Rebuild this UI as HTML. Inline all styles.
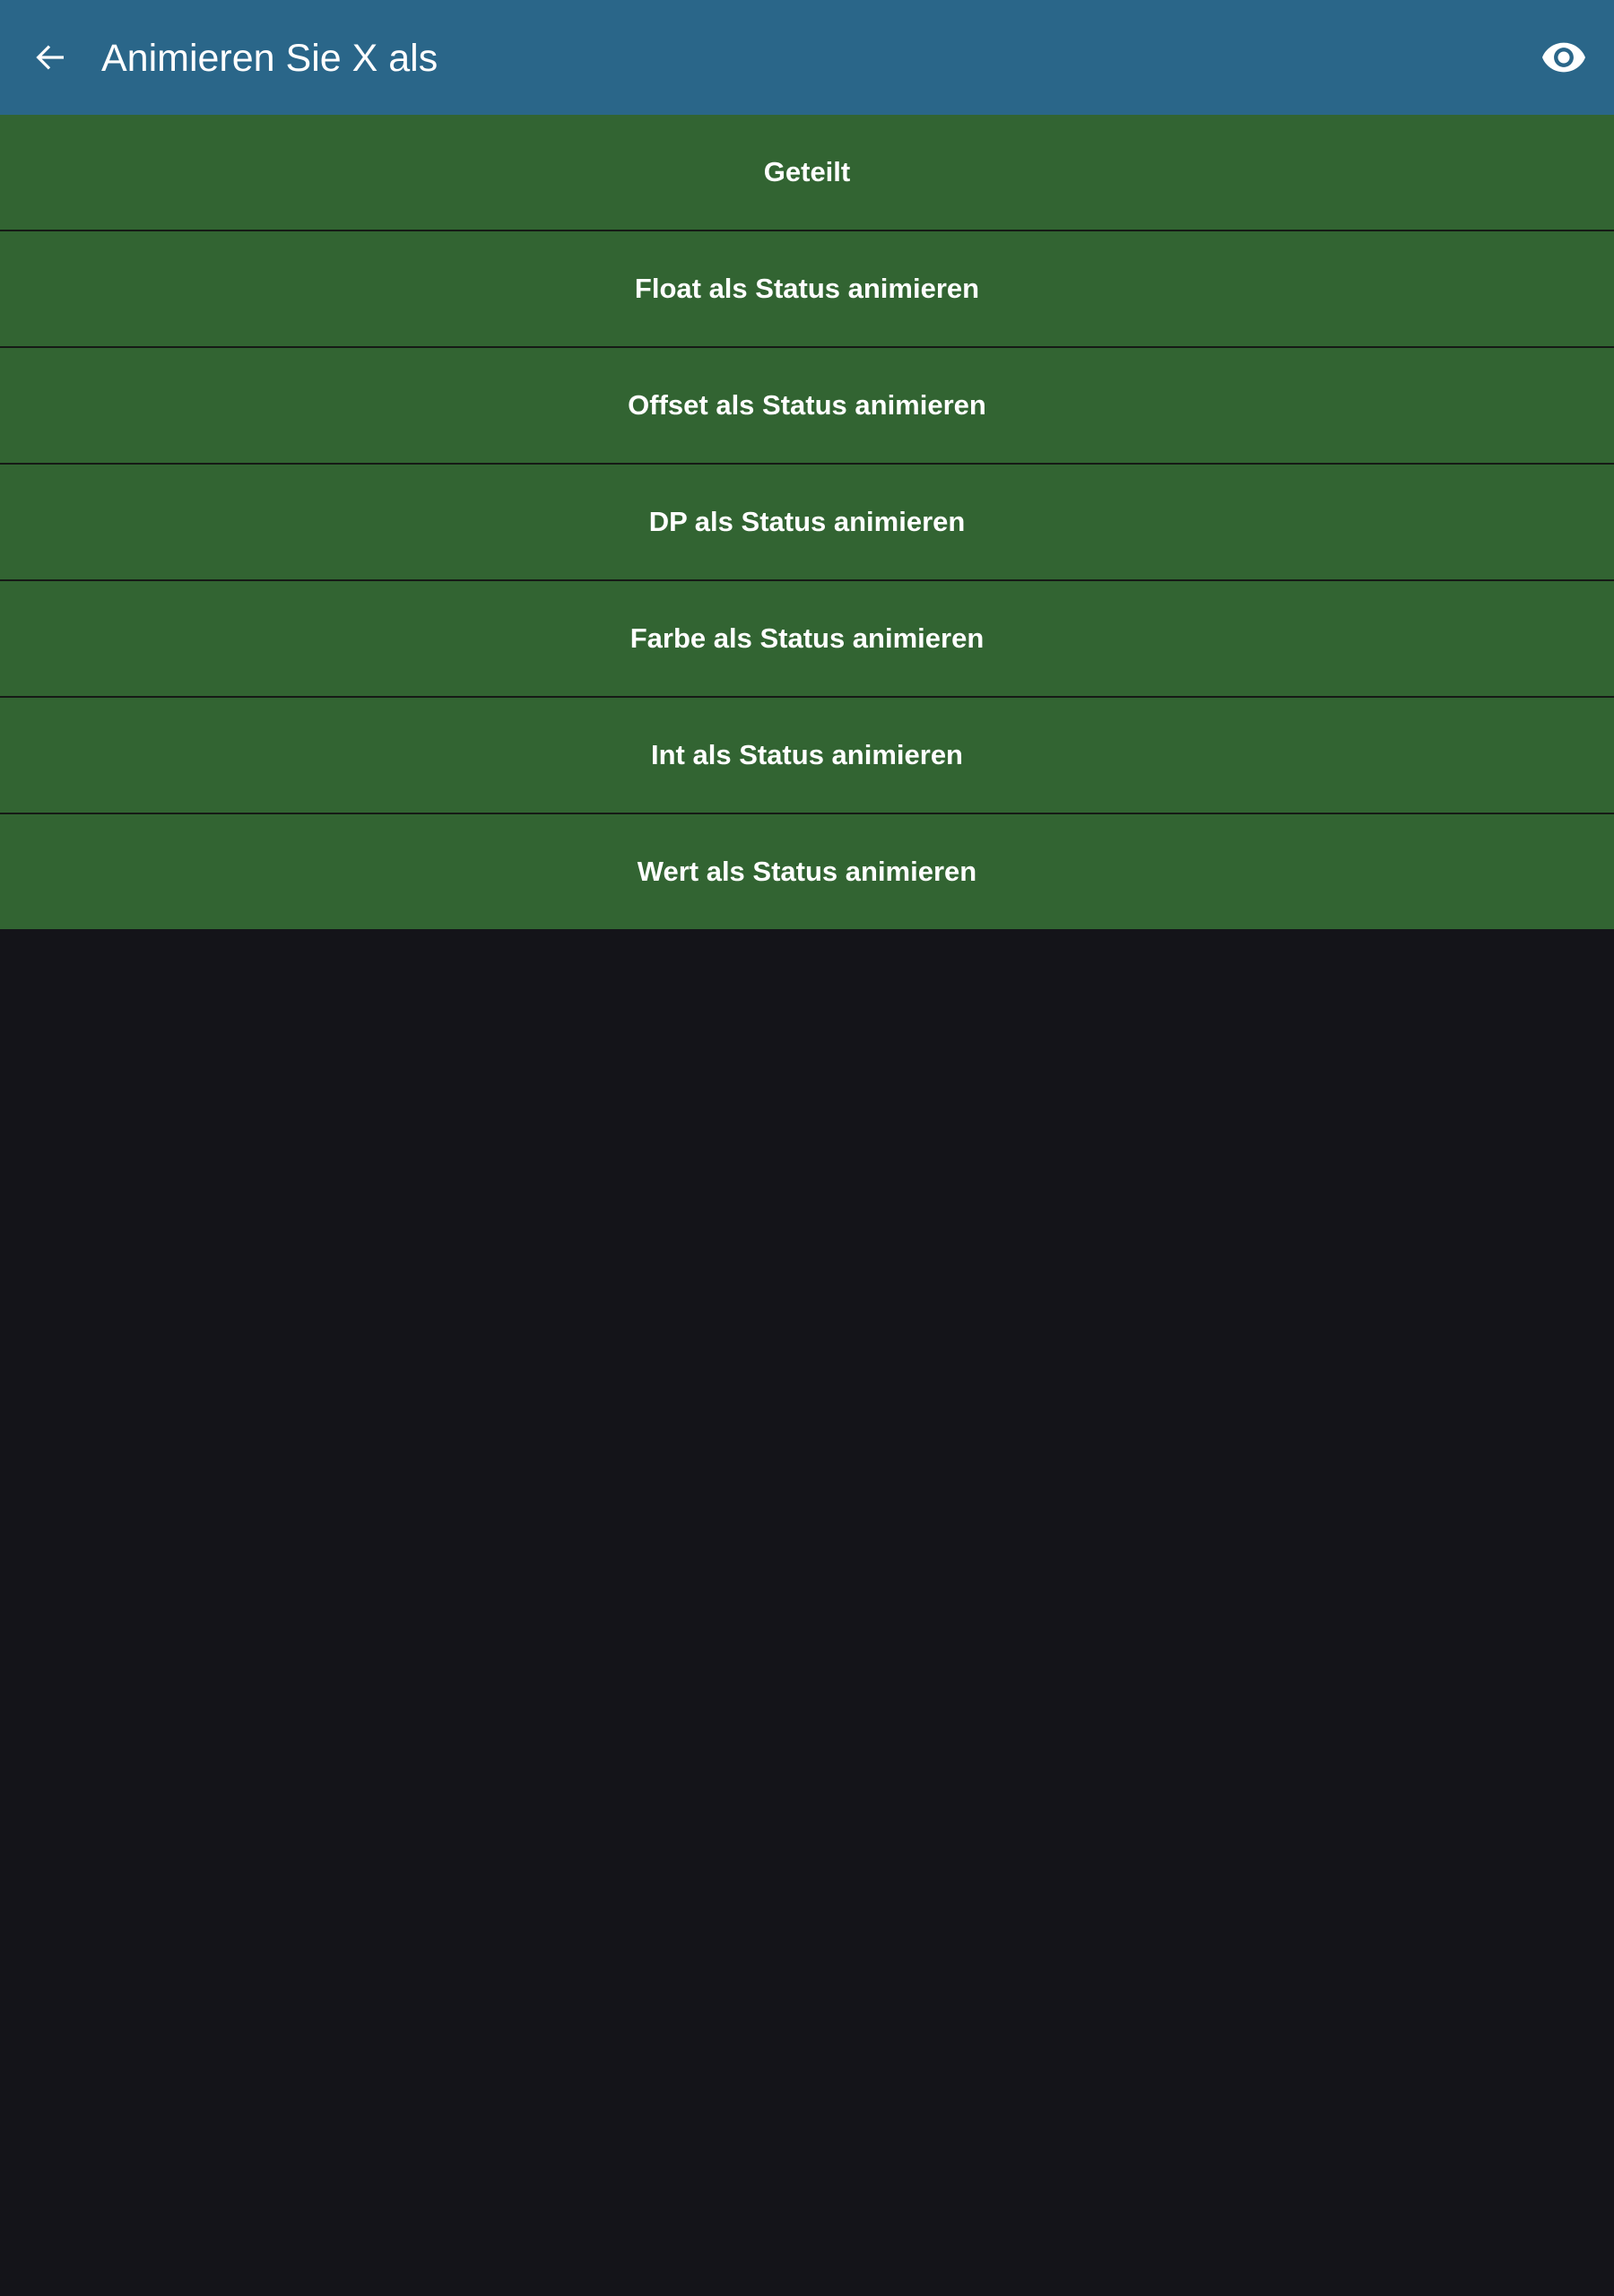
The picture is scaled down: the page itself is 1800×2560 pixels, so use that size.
<!DOCTYPE html>
<html><head><style>
body{margin:0;width:1800px;height:2560px;background:#141419;font-family:"Liberation Sans",sans-serif;overflow:hidden}
.hdr{height:128px;background:#2a6689;position:relative;color:#fff}
.hdr .t{position:absolute;left:113px;top:35px;font-size:43px;line-height:60px}
.row{height:128px;background:#326432;border-bottom:2px solid #161a16;color:#fff;font-size:31px;font-weight:bold;text-align:center;line-height:128px}
.row:last-child{border-bottom:none}
</style></head><body>
<div class="hdr">
<svg style="position:absolute;left:32px;top:40px" width="48" height="48" viewBox="0 0 24 24"><path d="M19.5 12H5.5M11.5 5.8L5.3 12l6.2 6.2" stroke="#fff" stroke-width="1.6" fill="none"/></svg>
<div class="t">Animieren Sie X als</div>
<svg style="position:absolute;left:1720px;top:37px" width="48" height="54" viewBox="1 4 22 16"><path d="M12 4.5C7 4.5 2.73 7.61 1 12c1.730 4.39 6 7.5 11 7.5s9.27-3.11 11-7.5c-1.73-4.39-6-7.5-11-7.5zM12 17c-2.76 0-5-2.24-5-5s2.24-5 5-5 5 2.24 5 5-2.240 5-5 5zm0-8c-1.66 0-3 1.34-3 3s1.34 3 3 3 3-1.34 3-3-1.34-3-3-3z" fill="#fff"/></svg>
</div>
<div>
<div class="row">Geteilt</div>
<div class="row">Float als Status animieren</div>
<div class="row">Offset als Status animieren</div>
<div class="row">DP als Status animieren</div>
<div class="row">Farbe als Status animieren</div>
<div class="row">Int als Status animieren</div>
<div class="row">Wert als Status animieren</div>
</div>
</body></html>
